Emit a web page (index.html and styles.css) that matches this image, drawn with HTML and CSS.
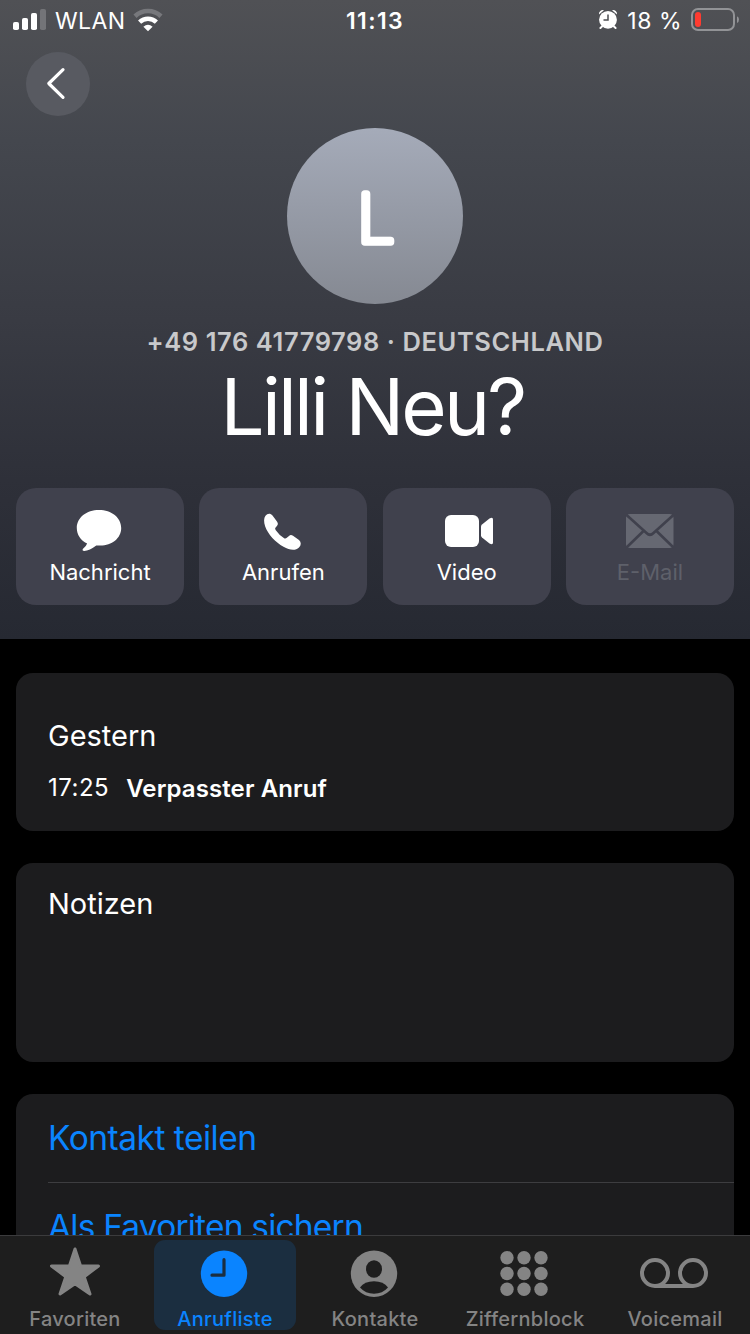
FILE: index.html
```html
<!DOCTYPE html>
<html lang="de">
<head>
<meta charset="utf-8">
<title>Kontakt</title>
<link rel="stylesheet" href="styles.css">
</head>
<body>
<div class="screen">
  <header class="hero">
    <div class="status">
      <div class="status-left">
        <svg class="signal" width="34" height="22" viewBox="0 0 34 22">
          <g fill="#fff"><rect x="0" y="13" width="6" height="8" rx="1.8"/><rect x="9" y="9" width="6" height="12" rx="1.8"/><rect x="18" y="4" width="6" height="17" rx="1.8"/></g>
          <rect x="27" y="0" width="6" height="21" rx="1.8" fill="#737478"/>
        </svg>
        <span class="carrier">WLAN</span>
        <svg class="wifi" width="30" height="23" viewBox="0 0 30 23">
          <g fill="none"><path d="M2 7.2A19 19 0 0 1 28 7.2" stroke="#77787c" stroke-width="4.6"/><path d="M6.6 13.1A12.4 12.4 0 0 1 23.4 13.1" stroke="#fff" stroke-width="4.6"/></g>
          <path d="M10.4 17.8Q15 13.8 19.600 17.800L15 22.200Z" fill="#fff"/>
        </svg>
      </div>
      <span class="clock">11:13</span>
      <div class="status-right">
        <svg class="alarm" width="20" height="21" viewBox="0 0 20 21">
          <circle cx="10" cy="10.8" r="8.9" fill="#fff"/>
          <g stroke="#fff" stroke-width="2" stroke-linecap="round"><path d="M4 17.5L2.4 19M16 17.5L17.6 19"/></g>
          <path d="M1 5.400A3.800 3.800 0 0 1 6 1.200ZM19 5.400A3.800 3.800 0 0 0 14 1.200Z" fill="#fff"/>
          <path d="M10 5.5V11H5.500" fill="none" stroke="#4c4d51" stroke-width="1.5"/>
        </svg>
        <span class="percent">18 %</span>
        <svg class="battery" width="49" height="24" viewBox="0 0 49 24">
          <rect x="1" y="1" width="42" height="21" rx="6" fill="none" stroke="#929396" stroke-width="2"/>
          <rect x="4" y="4" width="6" height="15" rx="3" fill="#ff3b30"/>
          <path d="M46 8.2Q48 9 48 11.500T46 15Z" fill="#929396"/>
        </svg>
      </div>
    </div>
    <div class="nav"><span class="back"><svg width="64" height="64" viewBox="0 0 64 64"><path d="M37 17.7L22.8 31.5L37 45.3" fill="none" stroke="#fff" stroke-width="3.2" stroke-linecap="round" stroke-linejoin="round"/></svg></span></div>
    <svg class="avatar" width="176" height="176" viewBox="0 0 176 176">
      <defs><linearGradient id="tone" x2="0" y2="1"><stop stop-color="#a5abb9"/><stop offset="1" stop-color="#858992"/></linearGradient></defs>
      <circle cx="88" cy="88" r="88" fill="url(#tone)"/>
      <text class="initial" x="70.500" y="114">L</text>
    </svg>
    <div class="number">+49 176 41779798 · DEUTSCHLAND</div>
    <h1 class="name">Lilli Neu?</h1>
    <div class="actions">
      <div class="action">
        <svg width="54" height="46" viewBox="0 0 54 46"><path d="M26 4C38.500 4 48.200 11.500 48.200 22S38.500 39.700 27 39.500Q24.500 39.500 23.300 39.600Q16.500 44.700 11.200 45Q9 44.800 9.800 43Q13.500 40 14.100 37.600C7.500 34.500 3.800 28.500 3.800 22C3.800 11.500 13.500 4 26 4Z" fill="#fff"/></svg>
        <span>Nachricht</span>
      </div>
      <div class="action">
        <svg width="52" height="46" viewBox="0 0 52 46"><path d="M8.500 9.800C10.500 7 13.500 7 15.500 9.500L20.300 16Q21.700 18 20.100 19.700L18.200 22Q17.900 23 18.800 24.200Q22.500 29.600 27.500 32.400Q28.700 32.900 29.500 32.100L32 29.900Q33.800 28.400 36 29.800L42 34C44.400 36.200 44.300 39.200 42 41.500C38.300 45.100 32.500 44.100 26.500 40.800C18.500 36.200 11 28.400 8.200 20.500C6.700 16 6.700 12 8.500 9.800Z" fill="#fff"/></svg>
        <span>Anrufen</span>
      </div>
      <div class="action">
        <svg width="52" height="46" viewBox="0 0 52 46"><rect x="4" y="9" width="34" height="32" rx="6" fill="#fff"/><path d="M40 20.500Q40 19.500 41 18.500L48.500 12.500Q52 10.500 52 13.500V36.500Q52 39.500 48.500 37.500L41 31.500Q40 30.500 40 29.500Z" fill="#fff"/></svg>
        <span>Video</span>
      </div>
      <div class="action disabled">
        <svg width="52" height="46" viewBox="0 0 52 46"><rect x="2" y="8" width="47.500" height="34" rx="4" fill="#666872"/><path d="M2 8.500L22.500 27Q26 30.500 29.500 27L50 8.500M2 42L19.500 25M50 42L32.500 25" fill="none" stroke="#40414d" stroke-width="2.600"/></svg>
        <span>E-Mail</span>
      </div>
    </div>
  </header>
  <main class="content">
    <section class="card calls">
      <div class="label">Gestern</div>
      <div class="call"><span class="time">17:25</span><span class="missed">Verpasster Anruf</span></div>
    </section>
    <section class="card notes"><div class="label">Notizen</div></section>
    <section class="card links">
      <div class="link"><span class="share">Kontakt teilen</span></div>
      <div class="link"><span class="fav">Als Favoriten sichern</span></div>
    </section>
  </main>
  <nav class="tabs">
    <div class="tab">
      <svg width="71" height="54" viewBox="0 0 71 54"><path d="M35 9L40.600 26H58.500L44.200 36.700L50 54L35 43.700L20 54L25.800 36.700L11.500 26H29.400Z" fill="#848484" stroke="#848484" stroke-width="3" stroke-linejoin="round"/></svg>
      <span>Favoriten</span>
    </div>
    <div class="tab active">
      <svg width="72" height="54" viewBox="0 0 72 54"><circle cx="35" cy="33.700" r="23.200" fill="#0a84ff"/><path d="M35 19.700V35.200H23" fill="none" stroke="#1b2e40" stroke-width="3.200" stroke-linecap="round" stroke-linejoin="round"/></svg>
      <span>Anrufliste</span>
    </div>
    <div class="tab">
      <svg width="72" height="54" viewBox="0 0 72 54"><circle cx="35" cy="33.700" r="23.200" fill="#848484"/><ellipse cx="35" cy="29" rx="8" ry="8.800" fill="#1e1e1e"/><path d="M21 47.500Q25.500 41.300 35 41.300T49 47.500Q43.500 53.700 35 53.700T21 47.500Z" fill="#1e1e1e"/></svg>
      <span>Kontakte</span>
    </div>
    <div class="tab">
      <svg width="73" height="54" viewBox="0 0 73 54"><g fill="#848484"><circle cx="18" cy="17.700" r="6.700"/><circle cx="35" cy="17.700" r="6.700"/><circle cx="52" cy="17.700" r="6.700"/><circle cx="18" cy="33.500" r="6.700"/><circle cx="35" cy="33.500" r="6.700"/><circle cx="52" cy="33.500" r="6.700"/><circle cx="18" cy="49.300" r="6.700"/><circle cx="35" cy="49.300" r="6.700"/><circle cx="52" cy="49.300" r="6.700"/></g></svg>
      <span>Ziffernblock</span>
    </div>
    <div class="tab">
      <svg width="72" height="54" viewBox="0 0 72 54"><g fill="none" stroke="#848484" stroke-width="4"><circle cx="16" cy="33" r="13"/><circle cx="54" cy="33" r="13"/><path d="M16 46H54"/></g></svg>
      <span>Voicemail</span>
    </div>
  </nav>
</div>
</body>
</html>
```
FILE: styles.css
```css
* { box-sizing: border-box; }
body { margin: 0; background: #000; color: #fff; font-family: Inter, "Noto Sans", sans-serif; }
svg { display: block; flex: none; overflow: visible; }
span, h1, .number, .label { white-space: nowrap; }
.screen { width: 750px; height: 1334px; overflow: hidden; display: flex; flex-direction: column; }
.hero { flex: none; height: 639px; display: flex; flex-direction: column; align-items: center; background: linear-gradient(#505155, #44474e 22%, #393b43 50%, #2e3039 75%, #262932); }
.status { width: 750px; height: 40px; display: grid; grid-template: 40px / 1fr 120px 1fr; align-items: center; line-height: 36px; font-size: 23px; }
.status-left { display: flex; align-items: center; padding-left: 13px; }
.carrier { margin-left: 8px; padding-top: 2px; letter-spacing: 0.4px; width: 72px; }
.wifi { margin-left: 6px; }
.clock { padding-top: 2px; text-align: center; font-weight: 600; letter-spacing: 1.4px; }
.status-right { display: flex; align-items: center; justify-content: flex-end; padding-right: 10px; }
.percent { margin: 0 9px 0 9.5px; padding-top: 2px; letter-spacing: 0.5px; }
.alarm { margin-bottom: 1px; }
.nav { width: 100%; height: 88px; padding: 12px 26px; }
.back { display: block; width: 64px; height: 64px; border-radius: 50%; background: #585a61; }
.initial { font-size: 66px; font-weight: 100; fill: #fff; stroke: #fff; stroke-width: 7.5px; stroke-linejoin: round; }
.number { margin-top: 22px; height: 33px; line-height: 32px; font-size: 25.5px; font-weight: 600; color: #c8c9cb; letter-spacing: 0.57px; }
.name { margin: 0; padding-right: 5px; height: 96px; line-height: 96px; font-size: 78px; font-weight: 400; letter-spacing: -2.8px; }
.actions { width: 718px; margin-top: 33px; display: grid; grid-template-columns: repeat(4, 168px); justify-content: space-between; }
.action { height: 117px; padding-top: 18px; border-radius: 20px; background: #40414d; display: flex; flex-direction: column; align-items: center; font-size: 22px; line-height: 40px; }
.disabled { color: #5e606a; }
.content { flex: 1; min-height: 0; overflow: hidden; padding: 34px 16px 0; display: flex; flex-direction: column; gap: 32px; }
.card { flex: none; background: #1c1c1e; border-radius: 17px; padding: 0 32px; }
.calls { height: 158px; padding-top: 43px; }
.notes { height: 199px; padding-top: 21px; }
.label { font-size: 29px; line-height: 40px; }
.call { display: flex; gap: 17px; margin-top: 14px; line-height: 36px; font-size: 24px; }
.time { letter-spacing: 0.5px; }
.missed { padding-top: 1px; font-weight: 600; letter-spacing: 0.1px; }
.links { padding-right: 0; }
.link { height: 89px; line-height: 89px; border-bottom: 1px solid #3d3d40; font-size: 33.5px; color: #0a84ff; }
.share { letter-spacing: -0.5px; }
.fav { letter-spacing: -0.8px; }
.tabs { flex: none; height: 99px; border-top: 1px solid #3b3b3d; background: #1e1e1e; padding: 4px 4px 0; display: grid; grid-template-columns: repeat(5, 142px); justify-content: space-between; }
.tab { height: 90px; border-radius: 11px; display: flex; flex-direction: column; align-items: center; color: #848484; font-size: 20px; font-weight: 500; line-height: 50px; letter-spacing: 0.25px; }
.active { background: #1b2e40; color: #0a84ff; }
```
